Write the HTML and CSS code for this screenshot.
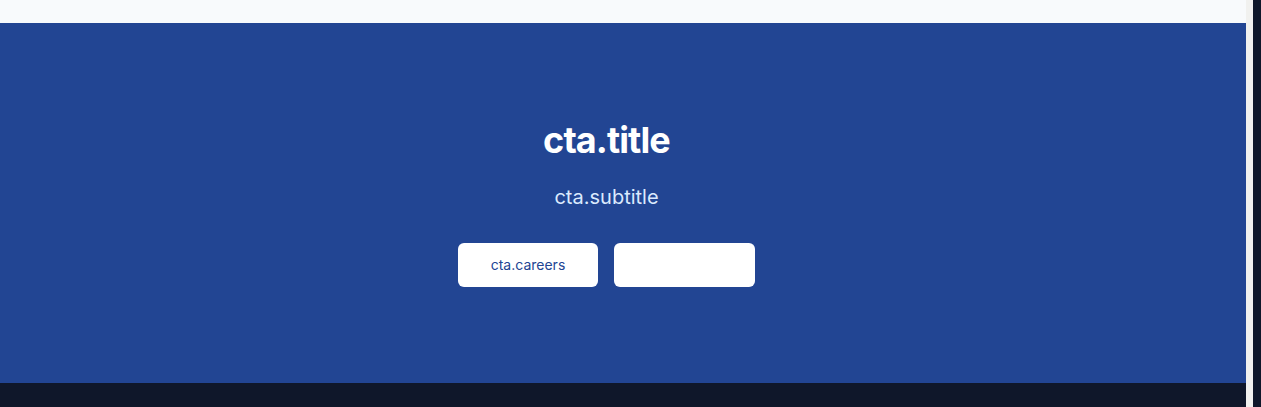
FILE: index.html
```html
<!DOCTYPE html>
<html lang="en">
<head>
<meta charset="utf-8">
<title>CTA</title>
<link rel="stylesheet" href="styles.css">
</head>
<body>
<div class="layout">
  <div class="page">
    <div class="topstrip"></div>
    <section class="cta">
      <h2 class="cta-title">cta.title</h2>
      <p class="cta-subtitle">cta.subtitle</p>
      <div class="cta-actions">
        <a class="btn btn-primary" href="#">cta.careers</a>
        <a class="btn btn-blank" href="#"></a>
      </div>
    </section>
    <footer class="footer"></footer>
  </div>
  <div class="scrollbar">
    <div class="track"></div>
    <div class="thumb"></div>
  </div>
</div>
</body>
</html>
```
FILE: styles.css
```css
* { box-sizing: border-box; }
html, body { margin: 0; padding: 0; height: 100%; overflow: hidden; }
body { font-family: Inter, "Noto Sans", sans-serif; background: #0f172a; }
.layout { display: flex; height: 407px; }
.page { flex: 1; display: flex; flex-direction: column; }
.topstrip { height: 23px; background: #f8fafc; }
.cta {
  height: 360px;
  background: #224593;
  display: flex;
  flex-direction: column;
  align-items: center;
  justify-content: center;
  padding: 0 33px 0 0;
}
.cta-title {
  margin: 0 0 23px;
  font-size: 36px;
  line-height: 40px;
  font-weight: 700;
  letter-spacing: -0.025em;
  color: #ffffff;
}
.cta-subtitle {
  margin: 0 0 32px;
  font-size: 20px;
  line-height: 28px;
  color: #dbeafe;
}
.cta-actions { display: flex; gap: 16px; }
.btn {
  display: flex;
  align-items: center;
  justify-content: center;
  height: 44px;
  border-radius: 6px;
  background: #ffffff;
  text-decoration: none;
  font-size: 14px;
  font-weight: 400;
}
.btn-primary { width: 140px; color: #224593; }
.btn-blank { width: 141px; color: #ffffff; }
.footer { flex: 1; background: #0f172a; }
.scrollbar { width: 15px; display: flex; }
.track { width: 7px; background: #f1f1ef; }
.thumb { width: 8px; background: #0f172a; }
```
